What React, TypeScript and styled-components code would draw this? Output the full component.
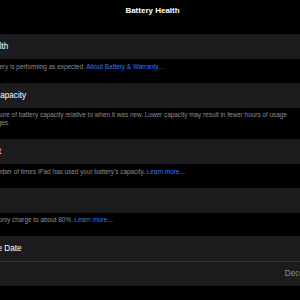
import React from "react";
import styled, { createGlobalStyle } from "styled-components";

const GlobalStyle = createGlobalStyle`
  html, body {
    margin: 0;
    padding: 0;
    background: #000;
    overflow: hidden;
  }
  body {
    font-family: "Liberation Sans", Arial, sans-serif;
    -webkit-font-smoothing: antialiased;
  }
`;

const Viewport = styled.div`
  width: 300px;
  height: 300px;
  overflow: hidden;
  background: #000;
`;

const Screen = styled.div`
  width: 455px;
  margin-left: -75px;
`;

const NavBar = styled.header`
  height: 21px;
  display: flex;
  align-items: center;
  justify-content: center;
`;

const Title = styled.h1`
  margin: 0;
  font-size: 8px;
  font-weight: 700;
  color: #fff;
`;

const List = styled.main`
  padding: 13px 16px 0;
`;

const Group = styled.div`
  background: #1c1c1e;
  border-radius: 10px;
  overflow: hidden;
`;

const Cell = styled.div`
  position: relative;
  height: 25px;
  display: flex;
  align-items: center;
  justify-content: space-between;
  padding: 0 21px 0 15.5px;
  font-size: 8.2px;
  color: #fff;
  white-space: nowrap;

  & + &::before {
    content: "";
    position: absolute;
    top: 0;
    left: 15.5px;
    right: 0;
    height: 1px;
    background: #333336;
  }
`;

const Value = styled.span`
  color: #8e8e93;
`;

const Footer = styled.p`
  margin: 0;
  padding: 3.5px 21px 12px 18.4px;
  font-size: 6.4px;
  line-height: 8px;
  color: #8d8d93;
  white-space: nowrap;
`;

const Link = styled.span`
  color: #3478f6;
`;

export default function App() {
  return (
    <>
      <GlobalStyle />
      <Viewport>
        <Screen>
          <NavBar>
            <Title>Battery Health</Title>
          </NavBar>
          <List>
            <Group>
              <Cell>
                <span>Battery Health</span>
                <Value>Normal</Value>
              </Cell>
            </Group>
            <Footer>
              Your iPad battery is performing as expected.{" "}
              <Link>About Battery &amp; Warranty…</Link>
            </Footer>

            <Group>
              <Cell>
                <span>Maximum Capacity</span>
                <Value>100%</Value>
              </Cell>
            </Group>
            <Footer>
              This is a measure of battery capacity relative to when it was new. Lower capacity may result in fewer hours of usage
              <br />
              between charges.
            </Footer>

            <Group>
              <Cell>
                <span>Cycle Count</span>
                <Value>46</Value>
              </Cell>
            </Group>
            <Footer>
              This is the number of times iPad has used your battery’s capacity.{" "}
              <Link>Learn more…</Link>
            </Footer>

            <Group>
              <Cell>
                <span>80% Limit</span>
              </Cell>
            </Group>
            <Footer>
              This iPad will only charge to about 80%. <Link>Learn more…</Link>
            </Footer>

            <Group>
              <Cell>
                <span>Manufacture Date</span>
                <Value>May 2024</Value>
              </Cell>
              <Cell>
                <span>First Use</span>
                <Value>December 2024</Value>
              </Cell>
            </Group>
          </List>
        </Screen>
      </Viewport>
    </>
  );
}
